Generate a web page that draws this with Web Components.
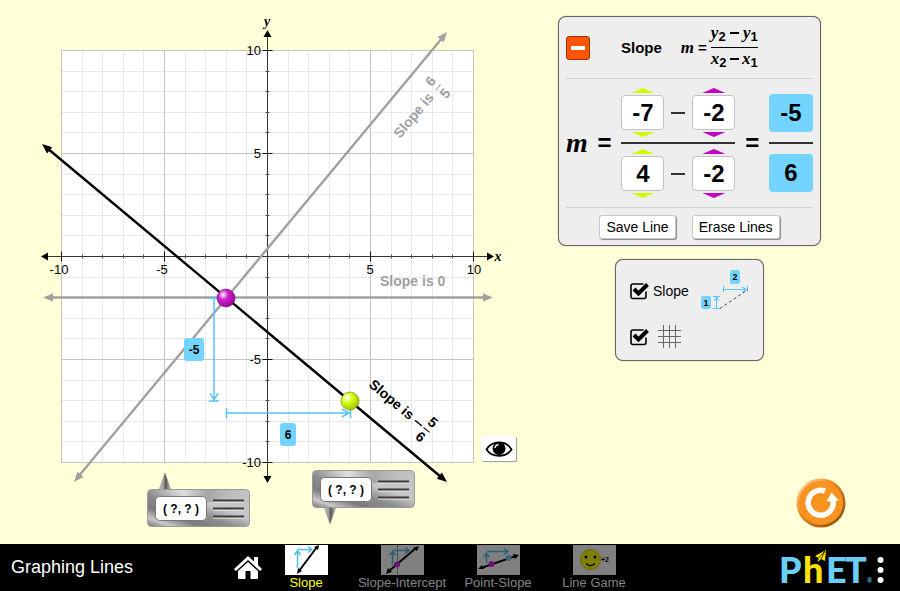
<!DOCTYPE html>
<html lang="en">
<head>
<meta charset="utf-8">
<title>Graphing Lines</title>
<style>
html, body { margin: 0; }
body { font-family: "Liberation Sans", Arial, sans-serif; color: #000; background: #ffffd8; }
</style>
</head>
<body>
<lines-app></lines-app>
<script>
const define = (name, html, init) => {
  const tpl = document.createElement('template');
  tpl.innerHTML = html;
  customElements.define(name, class extends HTMLElement {
    constructor() {
      super();
      this.attachShadow({ mode: 'open' }).append(tpl.content.cloneNode(true));
    }
    connectedCallback() {
      if (init && !this.ready) { this.ready = true; init(this, this.shadowRoot); }
    }
  });
};

/* ---------- graph ---------- */
const OX = 267.5, OY = 256.5, U = 20.6;
const line = (x1, y1, x2, y2, c, w = 1) =>
  `<line x1="${x1}" y1="${y1}" x2="${x2}" y2="${y2}" stroke="${c}" stroke-width="${w}"/>`;
const head = (x, y, deg, c, len = 10, half = 4) =>
  `<path d="M0 0L${-len} ${-half}V${half}Z" fill="${c}" transform="translate(${x} ${y}) rotate(${deg})"/>`;
const text = (x, y, s, anchor = 'middle', cls = '') =>
  `<text x="${x}" y="${y}" text-anchor="${anchor}" class="${cls}">${s}</text>`;

function gridMarkup() {
  let s = `<rect x="61.5" y="50.5" width="412" height="412" fill="#fff"/>`;
  for (const major of [false, true]) {
    for (let i = -10; i <= 10; i++) {
      if ((i % 5 === 0) !== major) continue;
      const c = major ? '#c4c4c4' : '#e9e9e9';
      const x = Math.round(OX + i * U - .5) + .5, y = Math.round(OY - i * U - .5) + .5;
      s += line(x, 50, x, 463, c) + line(61, y, 474, y, c);
    }
  }
  return s;
}
function axesMarkup() {
  let s = line(44, OY, 491, OY, '#333') + line(OX, 34, OX, 480, '#333');
  for (let i = -10; i <= 10; i++) {
    if (!i) continue;
    const h = i % 5 ? 2 : 5, c = i % 5 ? '#555' : '#111';
    const x = Math.round(OX + i * U - .5) + .5, y = Math.round(OY - i * U - .5) + .5;
    s += line(x, OY - h, x, OY + h, c) + line(OX - h, y, OX + h, y, c);
  }
  s += head(494, OY, 0, '#000', 7) + head(41, OY, 180, '#000', 7);
  s += head(OX, 30, -90, '#000', 7) + head(OX, 483, 90, '#000', 7);
  s += text(59, 274, '-10') + text(162, 274, '-5') + text(370, 274, '5') + text(474, 274, '10');
  s += text(261, 55, '10', 'end') + text(261, 158, '5', 'end') + text(261, 364, '-5', 'end') + text(261, 467, '-10', 'end');
  s += text(498, 261, 'x', 'middle', 'var') + text(267, 26, 'y', 'middle', 'var');
  return s;
}
const toolMarkup = (x, y, pointer) => `
  <g transform="translate(${x} ${y})">
    <path d="${pointer}" fill="url(#spike)" stroke="#8a8a8a" stroke-width=".5"/>
    <rect x=".5" y=".5" width="102" height="37" rx="4" fill="url(#metal)" stroke="#999"/>
    <rect x="2" y="1" width="99" height="12" rx="3" fill="url(#sheen)"/>
    <rect x="8.5" y="7.5" width="51" height="24" rx="4" fill="#fff" stroke="#777"/>
    <path d="M66 12.500H97M66 20.500H97M66 28.500H97" stroke="#eee" stroke-width="2"/>
    <path d="M66 11.500H97M66 19.500H97M66 27.500H97" stroke="#3c3838" stroke-width="2"/>
    <text x="34" y="24" text-anchor="middle" class="coord">( ?, ? )</text>
  </g>`;

define('line-graph', `
<style>
:host { display: block; min-width: 0; }
svg { display: block; width: 100%; height: auto; overflow: visible; }
text { font: 13px "Liberation Sans", Arial, sans-serif; }
.var { font: italic bold 14px "Liberation Serif", "Times New Roman", serif; }
.slope { font-weight: bold; font-size: 14px; }
.coord, .delta { font-weight: bold; font-size: 12px; }
</style>
<svg viewBox="0 0 540 544" role="img" aria-label="Graph of lines">
  <defs>
    <radialGradient id="magenta" cx=".35" cy=".32" r=".7"><stop offset="0" stop-color="#fff"/><stop offset=".12" stop-color="#f0b8f0"/><stop offset=".4" stop-color="#cc1fcc"/><stop offset="1" stop-color="#a000a0"/></radialGradient>
    <radialGradient id="lime" cx=".35" cy=".32" r=".75"><stop offset="0" stop-color="#fff"/><stop offset=".4" stop-color="#d4ff10"/><stop offset="1" stop-color="#9cbc00"/></radialGradient>
    <linearGradient id="metal" x1="0" y1="1" x2="1" y2="0"><stop offset="0" stop-color="#6f6f6f"/><stop offset=".12" stop-color="#c9c9c9"/><stop offset=".26" stop-color="#7c7c7c"/><stop offset=".42" stop-color="#8d8d8d"/><stop offset=".6" stop-color="#c6c6c6"/><stop offset="1" stop-color="#c2c2c2"/></linearGradient>
    <linearGradient id="sheen"><stop offset="0" stop-color="#777" stop-opacity=".3"/><stop offset=".35" stop-color="#fff" stop-opacity=".45"/><stop offset=".6" stop-color="#777" stop-opacity=".4"/><stop offset="1" stop-color="#bbb" stop-opacity="0"/></linearGradient>
    <linearGradient id="spike"><stop offset="0" stop-color="#ccc"/><stop offset=".4" stop-color="#999"/><stop offset=".55" stop-color="#555"/><stop offset="1" stop-color="#ccc"/></linearGradient>
  </defs>
  ${gridMarkup()}
  ${axesMarkup()}
  <g fill="#a0a0a0">
    ${line(50, 297.500, 486, 297.500, '#a0a0a0', 2.4)}
    ${head(493, 297.500, 0, '#a0a0a0')}${head(43, 297.500, 180, '#a0a0a0')}
    ${line(78, 477, 443, 37, '#a0a0a0', 2.4)}
    ${head(447, 32, -50, '#a0a0a0')}${head(74, 482, 130, '#a0a0a0')}
    <text x="380" y="286" class="slope">Slope is 0</text>
    <g transform="translate(400 139) rotate(-50)">
      <text class="slope">Slope is</text>
      ${text(64, -9, '6', 'middle', 'slope')}${line(60, -4, 68, -4, '#a0a0a0')}${text(64, 10, '5', 'middle', 'slope')}
    </g>
  </g>
  ${line(47, 148, 441, 477, '#000', 2.4)}
  ${head(42, 144, 220, '#000')}${head(447, 482, 40, '#000')}
  <g transform="translate(368 386) rotate(40)">
    <text class="slope">Slope is</text>
    ${line(58, -4, 67, -4, '#000', 1.5)}
    ${text(73, -9, '5', 'middle', 'slope')}${line(69, -4, 77, -4, '#000')}${text(73, 10, '6', 'middle', 'slope')}
  </g>
  <g fill="none" stroke="#55c4ff" stroke-width="1.500">
    <path d="M209 298H219M214 298V400M209 401H219M210 393L214 400L218 393"/>
    <path d="M226.500 408V418M226.500 413H349M350.500 408V418M342 409L349 413L342 417"/>
  </g>
  <rect x="184" y="338" width="20" height="23" rx="3" fill="#73d5ff"/>
  <rect x="280" y="423" width="16" height="23" rx="3" fill="#73d5ff"/>
  ${text(194, 354, '-5', 'middle', 'delta')}${text(288, 439, '6', 'middle', 'delta')}
  <circle cx="226" cy="298" r="9" fill="url(#magenta)" stroke="#700070" stroke-width=".6"/>
  <circle cx="350" cy="401" r="9" fill="url(#lime)" stroke="#6d8000" stroke-width=".6"/>
  ${toolMarkup(147, 489, 'M12 1L18 -16L24 1Z')}
  ${toolMarkup(312, 470, 'M12 37L18 54L24 37Z')}
  <foreignObject x="480" y="435" width="38" height="29"><eye-button></eye-button></foreignObject>
</svg>`);

define('eye-button', `
<style>
:host { display: block; }
button { display: grid; place-items: center; width: 35px; height: 25px; margin: 1px; padding: 0; background: #fff; border: 0; border-radius: 2px; box-shadow: 1px 1px 1px #999, 0 0 1px #bbb; cursor: pointer; }
svg { display: block; }
</style>
<button type="button" aria-label="Hide lines">
  <svg width="28" height="20" viewBox="0 0 28 20">
    <path d="M1.500 10.500C7 1 21 1 26.500 10.500C21 19 7 19 1.500 10.500Z" fill="#fff" stroke="#000" stroke-width="1.800"/>
    <circle cx="14" cy="9.500" r="6.500"/>
    <path d="M10 9A4 4 0 0 1 13.500 5.500" fill="none" stroke="#fff" stroke-width="1.300"/>
  </svg>
</button>`);

/* ---------- equation panel ---------- */
define('sim-panel', `
<style>
:host { display: block; box-sizing: border-box; background: #eee; border: 1px solid #666; border-radius: 8px; box-shadow: 0 0 1px #666; }
</style><slot></slot>`);

define('number-picker', `
<style>
:host { display: grid; justify-items: center; row-gap: 2px; width: 43px; }
button { width: 23px; height: 5px; padding: 0; border: 0; background: var(--tone); clip-path: polygon(50% 0, 100% 100%, 0 100%); cursor: pointer; }
button.down { clip-path: polygon(0 0, 100% 0, 50% 100%); }
output { box-sizing: border-box; width: 100%; height: 35px; line-height: 34px; text-align: center; font-weight: bold; font-size: 24px; background: #fff; border: 1px solid #c2c2c2; border-radius: 4px; }
</style>
<button type="button" class="up" aria-label="Increase"></button>
<output><slot></slot></output>
<button type="button" class="down" aria-label="Decrease"></button>`, (el, root) => {
  const step = d => { el.textContent = Math.max(-10, Math.min(10, Number(el.textContent) + d)); };
  root.querySelector('.up').onclick = () => step(1);
  root.querySelector('.down').onclick = () => step(-1);
});

define('slope-formula', `
<style>
:host { display: flex; align-items: center; gap: 4px; font-weight: bold; }
i { font: italic bold 17px "Liberation Serif", "Times New Roman", serif; }
.eq { font-size: 15px; }
.frac { display: grid; }
.row { display: flex; justify-content: space-between; align-items: center; height: 22px; line-height: 18px; width: 47px; padding-bottom: 3px; }
.row + .row { border-top: 1px solid #000; padding: 0 0 3px; }
.term { display: flex; align-items: baseline; }
sub { font-size: 13px; line-height: 1; position: relative; top: 3px; vertical-align: baseline; }
.minus { width: 9px; height: 2px; background: #000; }
</style>
<i>m</i><span class="eq">=</span>
<span class="frac">
  <span class="row"><span class="term"><i>y</i><sub>2</sub></span><span class="minus"></span><span class="term"><i>y</i><sub>1</sub></span></span>
  <span class="row"><span class="term"><i>x</i><sub>2</sub></span><span class="minus"></span><span class="term"><i>x</i><sub>1</sub></span></span>
</span>`);

define('push-button', `
<style>
:host { display: block; }
button { font: 14px "Liberation Sans", Arial, sans-serif; color: #000; height: 24px; padding: 0 6px; background: #fff; border: 1px solid #c8c8c8; border-radius: 3px; box-shadow: 1px 1px 1px #888; cursor: pointer; }
</style>
<button type="button"><slot></slot></button>`);

define('equation-panel', `
<style>
:host { display: block; width: 263px; }
sim-panel { padding: 0 7px; }
header { display: flex; align-items: center; height: 61px; border-bottom: 1px solid #d2d2d2; }
.collapse { display: grid; place-items: center; width: 24px; height: 24px; padding: 0; background: #ff5500; border: 1px solid #8d3a13; border-radius: 3px; cursor: pointer; }
.collapse::before { content: ""; width: 14px; height: 4px; background: #fff; }
h2 { margin: 0 19px 0 31px; font-size: 15px; }
.equation { display: flex; align-items: center; justify-content: space-between; padding: 9px 0; border-bottom: 1px solid #d2d2d2; }
i { font: italic bold 28px "Liberation Serif", "Times New Roman", serif; }
.eq { font-size: 24px; font-weight: bold; }
.frac, .result { display: grid; row-gap: 5px; }
.result { row-gap: 10px; width: 44px; }
.bar { height: 2px; background: #333; }
.row { display: flex; align-items: center; gap: 7px; }
.minus { width: 14px; height: 2px; background: #333; }
.delta { height: 38px; line-height: 38px; text-align: center; font-size: 24px; font-weight: bold; background: #73d5ff; border-radius: 4px; }
number-picker.a { --tone: #d4f800; }
number-picker.b { --tone: #c400c4; }
footer { display: flex; justify-content: center; gap: 16px; padding: 7px 0 6px; }
</style>
<sim-panel>
  <header>
    <button class="collapse" type="button" aria-label="Collapse equation"></button>
    <h2>Slope</h2><slope-formula></slope-formula>
  </header>
  <div class="equation">
    <i>m</i><span class="eq">=</span>
    <div class="frac">
      <div class="row"><number-picker class="a">-7</number-picker><span class="minus"></span><number-picker class="b">-2</number-picker></div>
      <div class="bar"></div>
      <div class="row"><number-picker class="a">4</number-picker><span class="minus"></span><number-picker class="b">-2</number-picker></div>
    </div>
    <span class="eq">=</span>
    <div class="result"><div class="delta">-5</div><div class="bar"></div><div class="delta">6</div></div>
  </div>
  <footer><push-button>Save Line</push-button><push-button>Erase Lines</push-button></footer>
</sim-panel>`);

/* ---------- visibility options ---------- */
define('check-option', `
<style>
:host { display: block; }
label { display: flex; align-items: center; gap: 4px; font-size: 14px; cursor: pointer; }
.box { display: grid; width: 19px; height: 18px; }
.box > * { grid-area: 1 / 1; }
input { appearance: none; margin: 0; width: 19px; height: 18px; z-index: 1; }
input:not(:checked) + svg .tick { display: none; }
::slotted(:last-child) { margin-left: auto; }
</style>
<label><span class="box"><input type="checkbox" checked>
<svg width="19" height="18" viewBox="0 0 19 18" fill="none" stroke="#000">
  <path d="M16 9.500V14.500a2 2 0 0 1-2 2H3a2 2 0 0 1-2-2V4a2 2 0 0 1 2-2H13.500" stroke-width="1.600"/>
  <path class="tick" d="M4 7L8.500 11.500L17.500 2.500" stroke-width="4"/>
</svg></span><slot></slot></label>`, (el, root) => {
  root.querySelector('input').setAttribute('aria-label', el.getAttribute('name'));
});

define('visibility-panel', `
<style>
:host { display: block; width: 149px; }
sim-panel { padding: 9px 13px 11px 14px; }
check-option + check-option { margin-top: 11px; }
svg { display: block; }
svg text { font: bold 9px "Liberation Sans", Arial, sans-serif; }
.grid { margin-left: 4px; margin-right: auto; }
</style>
<sim-panel>
  <check-option name="Slope"><span>Slope</span>
    <svg width="50" height="44" viewBox="0 0 50 44" fill="none">
      <rect x="30" y="1" width="10" height="14" rx="2" fill="#73d5ff"/><rect x="1" y="27" width="10" height="13" rx="2" fill="#73d5ff"/>
      <text x="35" y="11" text-anchor="middle" fill="#000">2</text><text x="6" y="37" text-anchor="middle" fill="#000">1</text>
      <path d="M23.500 17V23M23.500 20.500H47M47.500 17V23M42 18L46.500 20.500L42 23M13 39.500H20M16.500 39V28M13 27.500H20M14 32L16.500 28L19 32" stroke="#55c4ff"/>
      <path d="M20 39.500L48 20.500" stroke="#444" stroke-dasharray="3 2.500"/>
    </svg>
  </check-option>
  <check-option name="Grid">
    <svg class="grid" width="25" height="25" viewBox="0 0 25 25" stroke="#666"><path d="M6.500 1V24M12.500 1V24M18.500 1V24M1 6.500H24M1 12.500H24M1 18.500H24"/></svg>
  </check-option>
</sim-panel>`);

define('reset-button', `
<style>
:host { display: block; }
button { display: block; padding: 0; border: 0; background: none; cursor: pointer; }
svg { display: block; }
</style>
<button type="button" aria-label="Reset All">
<svg width="50" height="50" viewBox="0 0 50 50">
  <defs><linearGradient id="rim" x1="0" y1="0" x2="1" y2="1"><stop offset="0" stop-color="#fbe0b8"/><stop offset=".4" stop-color="#f08c1c"/><stop offset="1" stop-color="#7d420a"/></linearGradient></defs>
  <circle cx="25" cy="25" r="24.500" fill="url(#rim)"/><circle cx="25" cy="25" r="22" fill="#f7931e"/>
  <path d="M29 13A12.500 12.500 0 1 0 37 22.500" fill="none" stroke="#fff" stroke-width="5.500"/>
  <path d="M35.500 14.500L43 22.500L30.500 23.500Z" fill="#fff"/>
</svg></button>`);

/* ---------- navigation ---------- */
define('nav-tab', `
<style>
:host { display: block; width: 84px; }
button { display: flex; flex-direction: column; align-items: center; width: 100%; padding: 0; border: 0; background: none; font: 13px/16px "Liberation Sans", Arial, sans-serif; color: #fff; white-space: nowrap; opacity: .5; cursor: pointer; }
:host([selected]) button { opacity: 1; color: #ff0; }
</style>
<button type="button"><slot name="thumb"></slot><span><slot></slot></span></button>`);

define('phet-logo', `
<style>
:host { display: block; }
svg { display: block; }
text { font: 900 36px Lato, "Liberation Sans", sans-serif; }
.r { font: bold 7px "Liberation Sans", Arial, sans-serif; }
</style>
<svg width="94" height="47" viewBox="0 0 94 47" role="img" aria-label="PhET">
  <g fill="#6acff6"><text x="-1" y="39">P</text><text x="46" y="39">E</text><text x="65" y="39">T</text><text x="87" y="39" class="r">®</text></g>
  <text x="23" y="39" fill="#fee108">h</text>
  <path d="M35 12L46 6L45 17L41 15L38 18L38.500 14Z" fill="#fee108"/>
  <path d="M38.500 14L45 7L41 15" stroke="#000" stroke-width=".7" fill="none"/>
</svg>`);

define('nav-bar', `
<style>
:host { display: flex; height: 47px; background: #000; color: #fff; align-items: center; }
h1 { flex: 0 0 26%; box-sizing: border-box; margin: 0; padding-left: 11px; font-weight: normal; font-size: 18px; white-space: nowrap; }
button { padding: 0; border: 0; background: none; cursor: pointer; }
svg { display: block; }
nav { display: flex; gap: 12px; align-self: start; padding-top: 1px; margin-left: 2px; }
phet-logo { margin-left: auto; }
.menu { margin: 5px 16px 0 3px; }
svg text { font: bold 7px "Liberation Sans", Arial, sans-serif; }
</style>
<h1>Graphing Lines</h1>
<button type="button" aria-label="Home"><svg width="28" height="26" viewBox="0 0 28 26" fill="#fff"><path d="M14 1L0 14L2 16L14 5L26 16L28 14L24 10V2H20V6.500Z"/><path d="M14 7L4 16V23a1 1 0 0 0 1 1H11.500V16H16.500V24H23a1 1 0 0 0 1-1V16Z"/></svg></button>
<nav>
  <nav-tab selected><svg slot="thumb" width="43" height="30" viewBox="0 0 43 30"><rect width="43" height="30" fill="#fff"/><path d="M12.500 23V6M9.500 10L12.500 5.500L15.500 10M13 4.500H27M23 1.500L27 4.500L23 7.500" fill="none" stroke="#4fbfe8" stroke-width="1.500"/><path d="M14 26L32 2" stroke="#000" stroke-width="2"/><path d="M12 29L13 23L17 26ZM34 0L33 5L29 2Z"/></svg>Slope</nav-tab>
  <nav-tab><svg slot="thumb" width="43" height="30" viewBox="0 0 43 30"><rect width="43" height="30" fill="#fff"/><path d="M16.500 0V30" stroke="#999"/><path d="M11.500 20V7M8.500 10L11.500 6.500L14.500 10M12 5.500H28M24 2.500L28 5.500L24 8.500" fill="none" stroke="#4fbfe8" stroke-width="1.500"/><path d="M8 26L35 3" stroke="#000" stroke-width="2"/><path d="M5 29L7 23L11 27ZM38 1L36 6L32 3Z"/><circle cx="16" cy="19.500" r="3" fill="#e020e0"/></svg>Slope-Intercept</nav-tab>
  <nav-tab><svg slot="thumb" width="43" height="30" viewBox="0 0 43 30"><rect width="43" height="30" fill="#fff"/><path d="M9.500 18V9M6.500 12L9.500 8.500L12.500 12M10 6.500H31M27 3.500L31 6.500L27 9.500" fill="none" stroke="#4fbfe8" stroke-width="1.500"/><path d="M4 23L39 11" stroke="#000" stroke-width="2"/><path d="M1 24L5 20L7 24ZM42 10L38 14L36 9Z"/><circle cx="14.500" cy="19" r="3" fill="#e020e0"/><circle cx="31.500" cy="13" r="3" fill="#6fc9f0"/></svg>Point-Slope</nav-tab>
  <nav-tab><svg slot="thumb" width="43" height="30" viewBox="0 0 43 30"><rect width="43" height="30" fill="#fff"/><circle cx="17.500" cy="14.500" r="10" fill="#ff0" stroke="#d8d800"/><circle cx="13" cy="12" r="1.500"/><circle cx="22" cy="12" r="1.500"/><path d="M13 18.500Q17.500 23 22 18.500" fill="none" stroke="#000" stroke-width="1.200"/><text x="28" y="17">+2</text></svg>Line Game</nav-tab>
</nav>
<phet-logo></phet-logo>
<button class="menu" type="button" aria-label="Menu"><svg width="7" height="28" viewBox="0 0 7 28" fill="#fff"><circle cx="3.500" cy="4" r="3"/><circle cx="3.500" cy="14" r="3"/><circle cx="3.500" cy="24" r="3"/></svg></button>`);

define('lines-app', `
<style>
:host { display: flex; flex-direction: column; min-height: 100vh; }
main { flex: 1; display: grid; grid-template-columns: 3fr 2fr; }
aside { display: flex; flex-direction: column; padding-top: 16px; }
.stack { display: flex; flex-direction: column; align-items: center; gap: 13px; padding-right: 61px; }
reset-button { margin: auto 54px 16px auto; }
</style>
<main>
  <line-graph></line-graph>
  <aside>
    <div class="stack"><equation-panel></equation-panel><visibility-panel></visibility-panel></div>
    <reset-button></reset-button>
  </aside>
</main>
<nav-bar></nav-bar>`);
</script>
</body>
</html>
